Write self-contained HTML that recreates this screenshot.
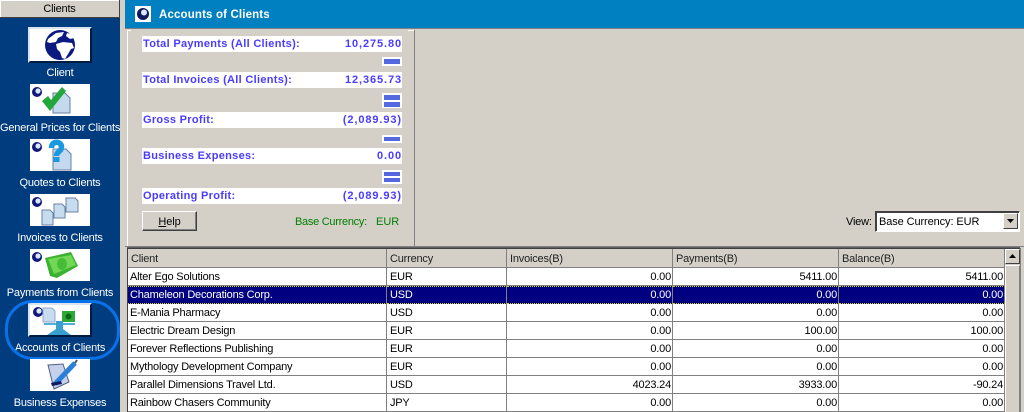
<!DOCTYPE html>
<html><head><meta charset="utf-8"><style>
html,body{margin:0;padding:0;width:1024px;height:412px;overflow:hidden;background:#d4d0c8;font-family:"Liberation Sans",sans-serif;font-size:11px;color:#000}
.a{position:absolute}
#side{left:0;top:0;width:120px;height:412px;background:#003c7e}
.lb{position:absolute;left:0;width:120px;text-align:center;color:#fff;font-size:11px;line-height:16px;letter-spacing:-.2px;white-space:nowrap}
.tile{position:absolute;left:30px;width:60px;height:32px;background:#fff}
.tile svg,.btn svg{position:absolute;left:0;top:0}
.btn{position:absolute;left:28px;width:60px;background:#fff;border:2px solid;border-color:#d8e4f0 #001c40 #001c40 #d8e4f0}
.bar{position:absolute;left:142px;width:260px;height:16px;background:#fff;color:#4a3cff;font-weight:bold;font-size:11px;line-height:17px;letter-spacing:.3px}
.bar span{position:absolute;left:1px;white-space:nowrap}
.bar b{position:absolute;right:0;white-space:nowrap;letter-spacing:.9px}
.op{position:absolute;left:382px;width:20px;background:#fff}
.op i{position:absolute;left:2px;width:16px;height:5px;background:#5468e0}
table{position:absolute;left:128px;top:249px;border-collapse:separate;border-spacing:0;table-layout:fixed;width:877px}
td,th{box-sizing:border-box;height:18px;padding:1px 1px 0 2px;border-right:1px solid #808080;border-bottom:1px solid #808080;font-size:11px;font-weight:normal;text-align:left;white-space:nowrap;overflow:hidden;line-height:16px;letter-spacing:-.2px}
th{background:#d4d0c8;height:19px;padding-left:3px;color:#222;padding-top:2px}
td{background:#fff}
td.r{text-align:right}
td.c{padding-left:3px}
tr.s td{background:#000080;color:#fff;border-top:1px dotted #d8d020;border-bottom:1px dotted #d8d020;line-height:14px;padding-top:0}
</style></head><body>

<div class="a" id="side"></div>
<div class="a" style="left:0;top:0;width:119px;height:17px;background:#d4d0c8;border-bottom:1px solid #404040;border-right:1px solid #404040;text-align:center;line-height:18px;font-size:11px;letter-spacing:-.2px;box-shadow:inset 1px 1px 0 #fff">Clients</div>

<div class="btn" style="top:27px;height:32px;">
<svg width="60" height="32" viewBox="0 0 60 32">
<circle cx="30" cy="16" r="15" fill="#0a1a80"/>
<path d="M18 10 l8-6 8-1 -2 4 -4 2 -2 4 -6 1 -3-1z M26 15 l7-2 9 1 2 5 -3 1 -3 5 -3 5 -3-1 -2-6 -3-3z M37 4 l4 1 3 4 -4 1 -4-3z" fill="#fff"/>
</svg></div>
<div class="lb" style="top:65px">Client</div>

<div class="tile" style="top:84px"><svg width="60" height="32" viewBox="0 0 60 32">
<circle cx="7" cy="8" r="5" fill="#101878"/><circle cx="8" cy="7" r="2.600" fill="#d8e8ff"/>
<path d="M23 9 h12 l5 5 v15 h-17z" fill="#c4d8ee" stroke="#6880a4"/>
<path d="M12 17 l6-5 3 4 11-13 4 4 -16 20z" fill="#22a83a"/>
</svg></div>
<div class="lb" style="top:120px">General Prices for Clients</div>

<div class="tile" style="top:139px"><svg width="60" height="32" viewBox="0 0 60 32">
<circle cx="7" cy="8" r="5" fill="#101878"/><circle cx="8" cy="7" r="2.600" fill="#d8e8ff"/>
<path d="M23 10 h13 l5 5 v16 h-18z" fill="#c4d8ee" stroke="#6880a4"/>
<path d="M21.500 9 c0-8 10-7 10-1 c0 5-5 4-5 9" fill="none" stroke="#1a98e0" stroke-width="5.500"/><rect x="23.500" y="18" width="6" height="5" fill="#1a98e0"/>
</svg></div>
<div class="lb" style="top:175px">Quotes to Clients</div>

<div class="tile" style="top:194px"><svg width="60" height="32" viewBox="0 0 60 32">
<circle cx="7" cy="8" r="5" fill="#101878"/><circle cx="8" cy="7" r="2.600" fill="#d8e8ff"/>
<g fill="#c8dcf0" stroke="#6880a4"><path d="M12 16 h8 l3 3 v12 h-11z"/><path d="M24 10 h8 l3 3 v11 h-11z"/><path d="M36 4 h9 l3 3 v11 h-12z"/></g>
</svg></div>
<div class="lb" style="top:230px">Invoices to Clients</div>

<div class="tile" style="top:249px"><svg width="60" height="32" viewBox="0 0 60 32">
<circle cx="7" cy="8" r="5" fill="#101878"/><circle cx="8" cy="7" r="2.600" fill="#d8e8ff"/>
<path d="M15 9 l26-6 7 14 -21 12 -7-2z" fill="#3cb030"/><path d="M18 10 l23-4 5 10 -22 9z" fill="#70d854"/><ellipse cx="32" cy="15" rx="5" ry="6" fill="#48bc38"/>
</svg></div>
<div class="lb" style="top:285px">Payments from Clients</div>

<div class="btn" style="top:303px;height:30px;width:60px"><svg width="60" height="30" viewBox="0 0 60 30">
<circle cx="8" cy="7" r="5" fill="#101878"/><circle cx="9" cy="6" r="2.600" fill="#d8e8ff"/>
<path d="M13 3 h9 l3 3 v11 h-12z" fill="#c8dcf0" stroke="#90a8c8"/>
<rect x="32" y="6" width="13" height="11" fill="#30a838"/><circle cx="38.500" cy="11.500" r="3" fill="#0a6a18"/>
<rect x="14" y="18" width="31" height="2" fill="#50b0d8"/>
<path d="M26 16 h7 v8 l8 6 h-24 l9-6z" fill="#38a0d0"/>
</svg></div>
<div class="lb" style="top:340px">Accounts of Clients</div>
<div class="a" style="left:5px;top:300px;width:109px;height:54px;border:3px solid #0a72e8;border-radius:28px"></div>

<div class="tile" style="top:359px"><svg width="60" height="32" viewBox="0 0 60 32">
<path d="M18 6 l15-1 6 18 -15 7z" fill="#c4d0ec" stroke="#50607c"/>
<path d="M25 25 L45 4" stroke="#2a80d8" stroke-width="5"/><path d="M45 4 l2-3" stroke="#405070" stroke-width="2"/>
<path d="M22 27 l10-2 -1-3 -10 2z" fill="#101860"/>
</svg></div>
<div class="lb" style="top:395px">Business Expenses</div>

<div class="a" style="left:125px;top:0;width:899px;height:28px;background:#0080c0"></div>
<div class="a" style="left:125px;top:28px;width:899px;height:1px;background:#808080"></div>
<div class="a" style="left:135px;top:6px;width:16px;height:16px;background:#fff"><svg width="16" height="16"><circle cx="8" cy="8" r="6" fill="#101860"/><circle cx="9" cy="6.500" r="3" fill="#d8e8ff"/></svg></div>
<div class="a" style="left:159px;top:7px;color:#fff;font-weight:bold;font-size:11.5px;line-height:16px;letter-spacing:.15px;white-space:nowrap">Accounts of Clients</div>

<div class="a" style="left:127px;top:30px;width:1px;height:216px;background:#fff"></div>
<div class="a" style="left:127px;top:30px;width:4px;height:1px;background:#fff"></div>
<div class="a" style="left:408px;top:30px;width:6px;height:1px;background:#fff"></div>
<div class="a" style="left:414px;top:30px;width:1px;height:216px;background:#808080"></div>
<div class="a" style="left:125px;top:246px;width:899px;height:1px;background:#808080"></div>

<div class="bar" style="top:36px"><span>Total Payments (All Clients):</span><b>10,275.80</b></div>
<div class="op" style="top:57px;height:9px"><i style="top:2px"></i></div>
<div class="bar" style="top:72px"><span>Total Invoices (All Clients):</span><b>12,365.73</b></div>
<div class="op" style="top:93px;height:15px"><i style="top:2px"></i><i style="top:9px"></i></div>
<div class="bar" style="top:112px"><span>Gross Profit:</span><b>(2,089.93)</b></div>
<div class="op" style="top:135px;height:8px"><i style="top:2px;height:4px"></i></div>
<div class="bar" style="top:148px"><span>Business Expenses:</span><b>0.00</b></div>
<div class="op" style="top:170px;height:14px"><i style="top:2px;height:4px"></i><i style="top:8px;height:4px"></i></div>
<div class="bar" style="top:188px"><span>Operating Profit:</span><b>(2,089.93)</b></div>

<div class="a" style="left:142px;top:211px;width:53px;height:18px;border:1px solid;border-color:#fff #404040 #404040 #fff;box-shadow:inset -1px -1px 0 #808080;text-align:center;line-height:20px;font-size:11px;letter-spacing:-.1px"><u>H</u>elp</div>
<div class="a" style="left:295px;top:215px;color:#008000;line-height:14px;font-size:11px;letter-spacing:-.28px;white-space:nowrap">Base Currency:</div>
<div class="a" style="left:376px;top:215px;color:#008000;line-height:14px;font-size:11px">EUR</div>

<div class="a" style="left:846px;top:215px;line-height:14px;letter-spacing:-.2px">View:</div>
<div class="a" style="left:875px;top:211px;width:143px;height:19px;background:#fff;border:1px solid;border-color:#404040 #fff #fff #404040;box-shadow:inset 1px 1px 0 #404040;line-height:21px;text-indent:3px;letter-spacing:-.1px">Base Currency: EUR</div>
<div class="a" style="left:1003px;top:213px;width:15px;height:16px;background:#d4d0c8;box-sizing:border-box;border:1px solid;border-color:#fff #404040 #404040 #fff"><svg width="13" height="14" style="display:block"><path d="M3 5 h7 l-3.500 4z" fill="#000"/></svg></div>

<div class="a" style="left:127px;top:248px;width:893px;height:164px;background:#fff;box-shadow:inset 1px 1px 0 #404040,0 -1px 0 #606060"></div>
<table>
<colgroup><col style="width:259px"><col style="width:120px"><col style="width:166px"><col style="width:166px"><col style="width:166px"></colgroup>
<tr><th>Client</th><th>Currency</th><th>Invoices(B)</th><th>Payments(B)</th><th>Balance(B)</th></tr>
<tr><td>Alter Ego Solutions</td><td class="c">EUR</td><td class="r">0.00</td><td class="r">5411.00</td><td class="r">5411.00</td></tr>
<tr class="s"><td>Chameleon Decorations Corp.</td><td class="c">USD</td><td class="r">0.00</td><td class="r">0.00</td><td class="r">0.00</td></tr>
<tr><td>E-Mania Pharmacy</td><td class="c">USD</td><td class="r">0.00</td><td class="r">0.00</td><td class="r">0.00</td></tr>
<tr><td>Electric Dream Design</td><td class="c">EUR</td><td class="r">0.00</td><td class="r">100.00</td><td class="r">100.00</td></tr>
<tr><td>Forever Reflections Publishing</td><td class="c">EUR</td><td class="r">0.00</td><td class="r">0.00</td><td class="r">0.00</td></tr>
<tr><td>Mythology Development Company</td><td class="c">EUR</td><td class="r">0.00</td><td class="r">0.00</td><td class="r">0.00</td></tr>
<tr><td>Parallel Dimensions Travel Ltd.</td><td class="c">USD</td><td class="r">4023.24</td><td class="r">3933.00</td><td class="r">-90.24</td></tr>
<tr><td>Rainbow Chasers Community</td><td class="c">JPY</td><td class="r">0.00</td><td class="r">0.00</td><td class="r">0.00</td></tr>
</table>

<div class="a" style="left:1005px;top:249px;width:15px;height:163px;background:#d4d0c8"></div>
<div class="a" style="left:1005px;top:249px;width:15px;height:15px;box-sizing:border-box;border:1px solid;border-color:#fff #404040 #404040 #fff;background:#d4d0c8"><svg width="13" height="13" style="display:block"><path d="M3 8 h7 l-3.500-4z" fill="#000"/></svg></div>
<div class="a" style="left:1005px;top:265px;width:15px;height:147px;box-sizing:border-box;border-left:1px solid #fff;border-top:1px solid #fff;border-right:1px solid #808080"></div>
<div class="a" style="left:1020px;top:248px;width:1px;height:164px;background:#808080"></div>
</body></html>
